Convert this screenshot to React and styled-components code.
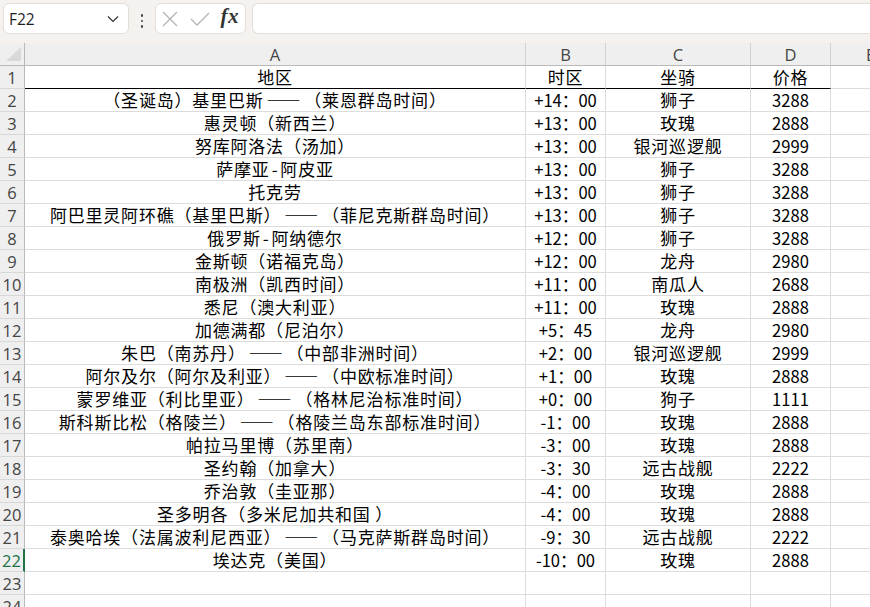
import React from "react";
import styled, { createGlobalStyle } from "styled-components";

const GlobalStyle = createGlobalStyle`
  html, body { margin: 0; padding: 0; background: #ffffff; overflow: hidden; }
  body { width: 870px; height: 607px; }
  * { box-sizing: border-box; }
`;

const Page = styled.div`
  width: 870px;
  height: 607px;
  overflow: hidden;
  display: flex;
  flex-direction: column;
`;

const Toolbar = styled.div`
  height: 43px;
  flex: none;
  background: #f4f1ee;
  display: flex;
  align-items: flex-start;
  padding: 3px 0 0 3px;
`;

const Box = styled.div`
  height: 31px;
  background: #ffffff;
  border: 1px solid #e2ded9;
  border-radius: 6px;
  display: flex;
  align-items: center;
`;

const NameBox = styled(Box)`
  width: 126px;
  padding: 0 9px 0 5px;
  justify-content: space-between;
  font-family: "Open Sans", "Noto Sans", sans-serif;
  font-size: 15.5px;
  color: #1f1f1f;
`;

const Dots = styled.div`
  width: 26px;
  display: flex;
  flex-direction: column;
  align-items: center;
  gap: 3px;
  padding-top: 11px;
  & > span {
    width: 2.5px;
    height: 2.5px;
    background: #444;
    border-radius: 1px;
  }
`;

const FormulaIcons = styled(Box)`
  width: 91px;
  padding: 0 6px 0 5px;
  justify-content: space-between;
`;

const Fx = styled.span`
  font-family: "Liberation Serif", "DejaVu Serif", serif;
  font-style: italic;
  font-weight: bold;
  font-size: 21px;
  line-height: 1;
  color: #333;
  letter-spacing: 0.5px;
  padding-bottom: 4px;
`;

const FormulaInput = styled(Box)`
  flex: 1;
  margin-left: 6px;
  border-top-right-radius: 0;
  border-bottom-right-radius: 0;
  border-right: none;
`;

const Sheet = styled.div`
  display: grid;
  grid-template-columns: 25px 501px 80px 145px 80px 80px;
  grid-auto-rows: 23px;
  font-family: "Noto Sans CJK SC", "Noto Sans", sans-serif;
`;

const Cell = styled.div`
  border-right: 1px solid #dcdcdc;
  border-bottom: 1px solid ${(p) => (p.$heavy ? "#000000" : "#dcdcdc")};
  display: flex;
  align-items: flex-end;
  justify-content: center;
  font-size: ${(p) => (p.$cjk ? "17px" : "16.6px")};
  letter-spacing: ${(p) => (p.$cjk ? "0.8px" : "0")};
  line-height: 22px;
  color: #000;
  white-space: pre;
  text-spacing-trim: space-all;
  font-kerning: none;
`;

const Punct = styled.span`
  margin: 0 ${(p) => (p.$kind === "dash" ? "3px" : "2px")};
`;

const ColHead = styled.div`
  background: #efefef;
  border-right: 1px solid #d2d2d2;
  border-bottom: 1px solid #b9b9b9;
  display: flex;
  align-items: center;
  justify-content: center;
  font-family: "Open Sans", "Noto Sans", sans-serif;
  font-size: 16.5px;
  color: #454545;
  padding-top: 1px;
`;

const Corner = styled(ColHead)`
  position: relative;
  border-right: 1px solid #b9b9b9;
  &::after {
    content: "";
    position: absolute;
    right: 3px;
    bottom: 4px;
    width: 0;
    height: 0;
    border-left: 15px solid transparent;
    border-bottom: 14px solid #d9d9d9;
  }
`;

const RowHead = styled.div`
  background: #efefef;
  border-right: ${(p) => (p.$active ? "2px solid #217346" : "1px solid #b9b9b9")};
  border-bottom: 1px solid #d8d8d8;
  display: flex;
  align-items: center;
  justify-content: center;
  font-family: "Open Sans", "Noto Sans", sans-serif;
  font-size: 16.5px;
  color: ${(p) => (p.$active ? "#217346" : "#454545")};
  padding-top: 1px;
`;

const rows = [
  ["（圣诞岛）基里巴斯——（莱恩群岛时间）", "+14：00", "狮子", "3288"],
  ["惠灵顿（新西兰）", "+13：00", "玫瑰", "2888"],
  ["努库阿洛法（汤加）", "+13：00", "银河巡逻舰", "2999"],
  ["萨摩亚-阿皮亚", "+13：00", "狮子", "3288"],
  ["托克劳", "+13：00", "狮子", "3288"],
  ["阿巴里灵阿环礁（基里巴斯）——（菲尼克斯群岛时间）", "+13：00", "狮子", "3288"],
  ["俄罗斯-阿纳德尔", "+12：00", "狮子", "3288"],
  ["金斯顿（诺福克岛）", "+12：00", "龙舟", "2980"],
  ["南极洲（凯西时间）", "+11：00", "南瓜人", "2688"],
  ["悉尼（澳大利亚）", "+11：00", "玫瑰", "2888"],
  ["加德满都（尼泊尔）", "+5：45", "龙舟", "2980"],
  ["朱巴（南苏丹）——（中部非洲时间）", "+2：00", "银河巡逻舰", "2999"],
  ["阿尔及尔（阿尔及利亚）——（中欧标准时间）", "+1：00", "玫瑰", "2888"],
  ["蒙罗维亚（利比里亚）——（格林尼治标准时间）", "+0：00", "狗子", "1111"],
  ["斯科斯比松（格陵兰）——（格陵兰岛东部标准时间）", "-1：00", "玫瑰", "2888"],
  ["帕拉马里博（苏里南）", "-3：00", "玫瑰", "2888"],
  ["圣约翰（加拿大）", "-3：30", "远古战舰", "2222"],
  ["乔治敦（圭亚那）", "-4：00", "玫瑰", "2888"],
  ["圣多明各（多米尼加共和国 ）", "-4：00", "玫瑰", "2888"],
  ["泰奥哈埃（法属波利尼西亚）——（马克萨斯群岛时间）", "-9：30", "远古战舰", "2222"],
  ["埃达克（美国）", "-10：00", "玫瑰", "2888"],
];

const allRows = [["地区", "时区", "坐骑", "价格"], ...rows, ["", "", "", ""], ["", "", "", ""]];

function RegionText({ text }) {
  const parts = text.split(/(——|-)/).filter(Boolean);
  return (
    <span>
      {parts.map((p, i) =>
        p === "——" || p === "-" ? (
          <Punct key={i} $kind={p === "——" ? "dash" : "hyphen"}>
            {p}
          </Punct>
        ) : (
          <React.Fragment key={i}>{p}</React.Fragment>
        )
      )}
    </span>
  );
}

export default function App() {
  return (
    <Page lang="zh-CN">
      <GlobalStyle />
      <Toolbar>
        <NameBox>
          <span>F22</span>
          <svg width="12" height="8" viewBox="0 0 12 8">
            <polyline points="1,1.5 6,6.5 11,1.5" fill="none" stroke="#333" strokeWidth="1.2" />
          </svg>
        </NameBox>
        <Dots>
          <span />
          <span />
          <span />
        </Dots>
        <FormulaIcons>
          <svg width="18" height="18" viewBox="0 0 18 18">
            <path d="M2 2 L16 16 M16 2 L2 16" stroke="#b4b4b4" strokeWidth="1.3" fill="none" />
          </svg>
          <svg width="22" height="18" viewBox="0 0 22 18">
            <polyline points="2,9 8,15 20,3" stroke="#b4b4b4" strokeWidth="1.3" fill="none" />
          </svg>
          <Fx>fx</Fx>
        </FormulaIcons>
        <FormulaInput />
      </Toolbar>
      <Sheet>
        <Corner />
        {["A", "B", "C", "D", "E"].map((c) => (
          <ColHead key={c}>{c}</ColHead>
        ))}
        {allRows.map((r, i) => {
          const n = i + 1;
          return (
            <React.Fragment key={n}>
              <RowHead $active={n === 22}>{n}</RowHead>
              {r.map((v, j) => (
                <Cell key={j} $heavy={n === 1} $cjk={n === 1 || j === 0 || j === 2}>
                  {j === 0 && n > 1 ? <RegionText text={v} /> : v}
                </Cell>
              ))}
              <Cell />
            </React.Fragment>
          );
        })}
      </Sheet>
    </Page>
  );
}
